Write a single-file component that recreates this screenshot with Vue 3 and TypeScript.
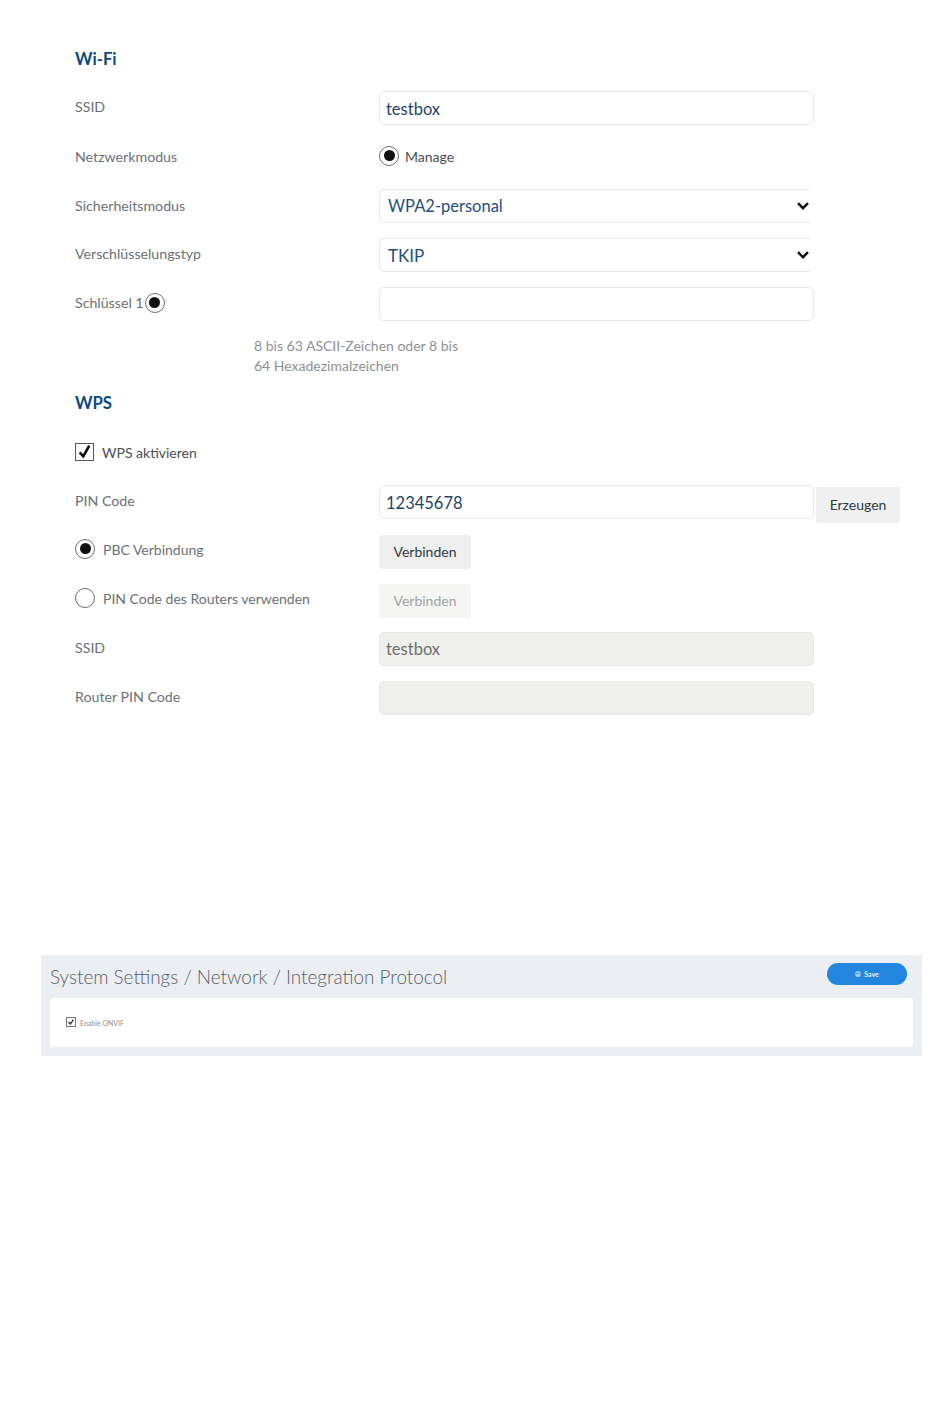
<script setup lang="ts">
const wifiHint = ['8 bis 63 ASCII-Zeichen oder 8 bis', '64 Hexadezimalzeichen']
</script>

<template>
  <main class="page">
    <section class="form">
      <h2 class="heading first">Wi-Fi</h2>
      <div class="row">
        <span class="label">SSID</span>
        <div class="control"><input class="field" value="testbox" readonly /></div>
      </div>
      <div class="row">
        <span class="label net">Netzwerkmodus</span>
        <div class="control inline">
          <span class="radio on lift"></span>
          <span class="radio-text dark">Manage</span>
        </div>
      </div>
      <div class="row">
        <span class="label net">Sicherheitsmodus</span>
        <div class="control">
          <div class="select small-text">
            <span class="select-value">WPA2-personal</span>
            <svg class="chev" viewBox="0 0 14 10"><path d="M2 2.2 7 7.2 12 2.2" /></svg>
          </div>
        </div>
      </div>
      <div class="row">
        <span class="label">Verschlüsselungstyp</span>
        <div class="control">
          <div class="select">
            <span>TKIP</span>
            <svg class="chev" viewBox="0 0 14 10"><path d="M2 2.2 7 7.2 12 2.2" /></svg>
          </div>
        </div>
      </div>
      <div class="row">
        <div class="label key">Schlüssel 1<span class="radio on"></span></div>
        <div class="control"><input class="field" value="" readonly /></div>
      </div>
      <p class="hint">
        <span v-for="line in wifiHint" :key="line">{{ line }}</span>
      </p>

      <h2 class="heading second">WPS</h2>
      <label class="check-row">
        <span class="check">
          <svg viewBox="0 0 20 20"><path d="M4 10.5 8.5 15.5 16 2" /></svg>
        </span>
        <span class="dark">WPS aktivieren</span>
      </label>
      <div class="row pin">
        <span class="label">PIN Code</span>
        <div class="control"><input class="field" value="12345678" readonly /></div>
        <button class="btn generate" type="button">Erzeugen</button>
      </div>
      <div class="row">
        <div class="label inline raised"><span class="radio on"></span><span class="radio-text">PBC Verbindung</span></div>
        <div class="control"><button class="btn" type="button">Verbinden</button></div>
      </div>
      <div class="row tight">
        <div class="label inline raised"><span class="radio"></span><span class="radio-text">PIN Code des Routers verwenden</span></div>
        <div class="control"><button class="btn disabled" type="button">Verbinden</button></div>
      </div>
      <div class="row">
        <span class="label">SSID</span>
        <div class="control"><input class="field off" value="testbox" readonly /></div>
      </div>
      <div class="row">
        <span class="label">Router PIN Code</span>
        <div class="control"><input class="field off" value="" readonly /></div>
      </div>
    </section>

    <section class="panel">
      <header class="panel-head">
        <h1 class="panel-title">System Settings / Network / Integration Protocol</h1>
        <button class="save" type="button">
          <svg viewBox="0 0 10 10"><path d="M1.5 1.5h7v7h-7z M3 3h4 M3 6h4v2.5H3z" /></svg>
          Save
        </button>
      </header>
      <div class="card">
        <span class="mini-check">
          <svg viewBox="0 0 10 10"><path d="M2 5 4.2 7.5 8 2" /></svg>
        </span>
        <span class="mini-label">Enable ONVIF</span>
      </div>
    </section>
  </main>
</template>

<style scoped>
.page {
  width: 950px;
  height: 1409px;
  background: #fff;
  font-family: Lato, "Open Sans", sans-serif;
  overflow: hidden;
}
.form {
  padding: 47px 0 0 75px;
}
.heading {
  margin: 0;
  height: 24px;
  line-height: 24px;
  font-size: 16.7px;
  font-weight: 700;
  color: #0d4a80;
}
.heading.first {
  margin-bottom: 20px;
}
.heading.second {
  margin-bottom: 20px;
}
.row {
  display: flex;
  align-items: center;
  height: 34px;
  margin-bottom: 15px;
}
.row.pin {
  margin-bottom: 16px;
}
.row.tight {
  margin-bottom: 14px;
}
.label {
  width: 304px;
  flex: none;
  font-size: 14.2px;
  color: #6c7177;
  margin-top: -3px;
}
.label.net {
  margin-top: -1px;
}
.label.raised {
  margin-top: -7px;
}
.key {
  display: flex;
  align-items: center;
  gap: 1px;
}
.inline {
  display: flex;
  align-items: center;
}
.control {
  width: 435px;
  flex: none;
}
.field {
  display: block;
  box-sizing: border-box;
  width: 435px;
  height: 34px;
  padding: 1px 6px 0;
  border: 1px solid #e6e8ea;
  border-radius: 5px;
  outline: none;
  background: #fff;
  font: 16.5px Lato, sans-serif;
  color: #1f4568;
}
.field.off {
  padding-top: 0;
  background: #efefec;
  border-color: #e8e8e5;
  color: #6b6f70;
}
.select {
  box-sizing: border-box;
  display: flex;
  align-items: center;
  justify-content: space-between;
  width: 431px;
  height: 34px;
  padding: 0 0 0 8px;
  border: 1px solid #e6e8ea;
  border-right: 0;
  border-radius: 5px 0 0 5px;
  font-size: 17px;
  color: #1f4f7c;
}
.small-text {
  font-size: 16.5px;
}
.chev {
  width: 14px;
  height: 10px;
}
.chev path {
  fill: none;
  stroke: #0c0f14;
  stroke-width: 2.4;
}
.radio {
  box-sizing: border-box;
  display: inline-block;
  flex: none;
  width: 20px;
  height: 20px;
  border: 1px solid #6a6d70;
  border-radius: 50%;
  background: #fff;
  position: relative;
}
.radio.on::after {
  content: "";
  position: absolute;
  inset: 3.5px;
  border-radius: 50%;
  background: #111;
}
.radio.lift {
  margin-top: -3px;
}
.radio-text {
  margin-left: 8px;
  font-size: 14px;
  color: #6c7177;
}
.raised .radio-text {
  margin-top: 2px;
}
.control .radio-text {
  margin-left: 6px;
}
.dark {
  font-size: 14px;
  color: #4a4f55;
}
.control .dark {
  margin-top: -1px;
}
.hint {
  margin: 0 0 15px 179px;
  font-size: 14px;
  line-height: 20px;
  color: #8d9194;
}
.hint span {
  display: block;
}
.check-row {
  display: flex;
  align-items: center;
  gap: 8px;
  height: 34px;
  margin-bottom: 16px;
}
.check {
  box-sizing: border-box;
  width: 19px;
  height: 18px;
  border: 1px solid #55585b;
  background: #fff;
}
.check svg {
  display: block;
  width: 17px;
  height: 16px;
}
.check path {
  fill: none;
  stroke: #0a0a0a;
  stroke-width: 3.2;
}
.btn {
  display: block;
  box-sizing: border-box;
  width: 92px;
  height: 34px;
  padding: 0 0 2px;
  border: 0;
  border-radius: 3px;
  background: #efefef;
  font: 14px Lato, sans-serif;
  color: #2f3a45;
}
.btn.disabled {
  background: #f5f5f4;
  color: #a0a4a6;
}
.generate {
  width: 84px;
  height: 36px;
  margin: 6px 0 0 2px;
  flex: none;
}
.panel {
  box-sizing: border-box;
  width: 881px;
  height: 101px;
  margin: 240px 0 0 41px;
  padding: 0 9px;
  background: #ebeef2;
}
.panel-head {
  display: flex;
  align-items: flex-start;
  justify-content: space-between;
  height: 43px;
}
.panel-title {
  margin: 8px 0 0;
  font-size: 18.9px;
  line-height: 28px;
  font-weight: 300;
  color: #5b6066;
}
.save {
  display: flex;
  align-items: center;
  justify-content: center;
  gap: 3px;
  width: 80px;
  height: 22px;
  margin: 8px 6px 0 0;
  border: 0;
  border-radius: 11px;
  background: #2285e0;
  color: #e8f3fc;
  font: 700 7px Lato, sans-serif;
}
.save svg {
  width: 6px;
  height: 6px;
}
.save path {
  fill: none;
  stroke: #e8f3fc;
  stroke-width: 1.2;
}
.card {
  display: flex;
  align-items: center;
  box-sizing: border-box;
  height: 49px;
  padding-left: 16px;
  border-radius: 2px;
  background: #fff;
}
.mini-check {
  box-sizing: border-box;
  width: 10px;
  height: 10px;
  border: 1px solid #777;
  margin-top: -1px;
}
.mini-check svg {
  display: block;
  width: 8px;
  height: 8px;
}
.mini-check path {
  fill: none;
  stroke: #222;
  stroke-width: 1.5;
}
.mini-label {
  margin-left: 4px;
  font-size: 7px;
  color: #8a8e92;
}
</style>
